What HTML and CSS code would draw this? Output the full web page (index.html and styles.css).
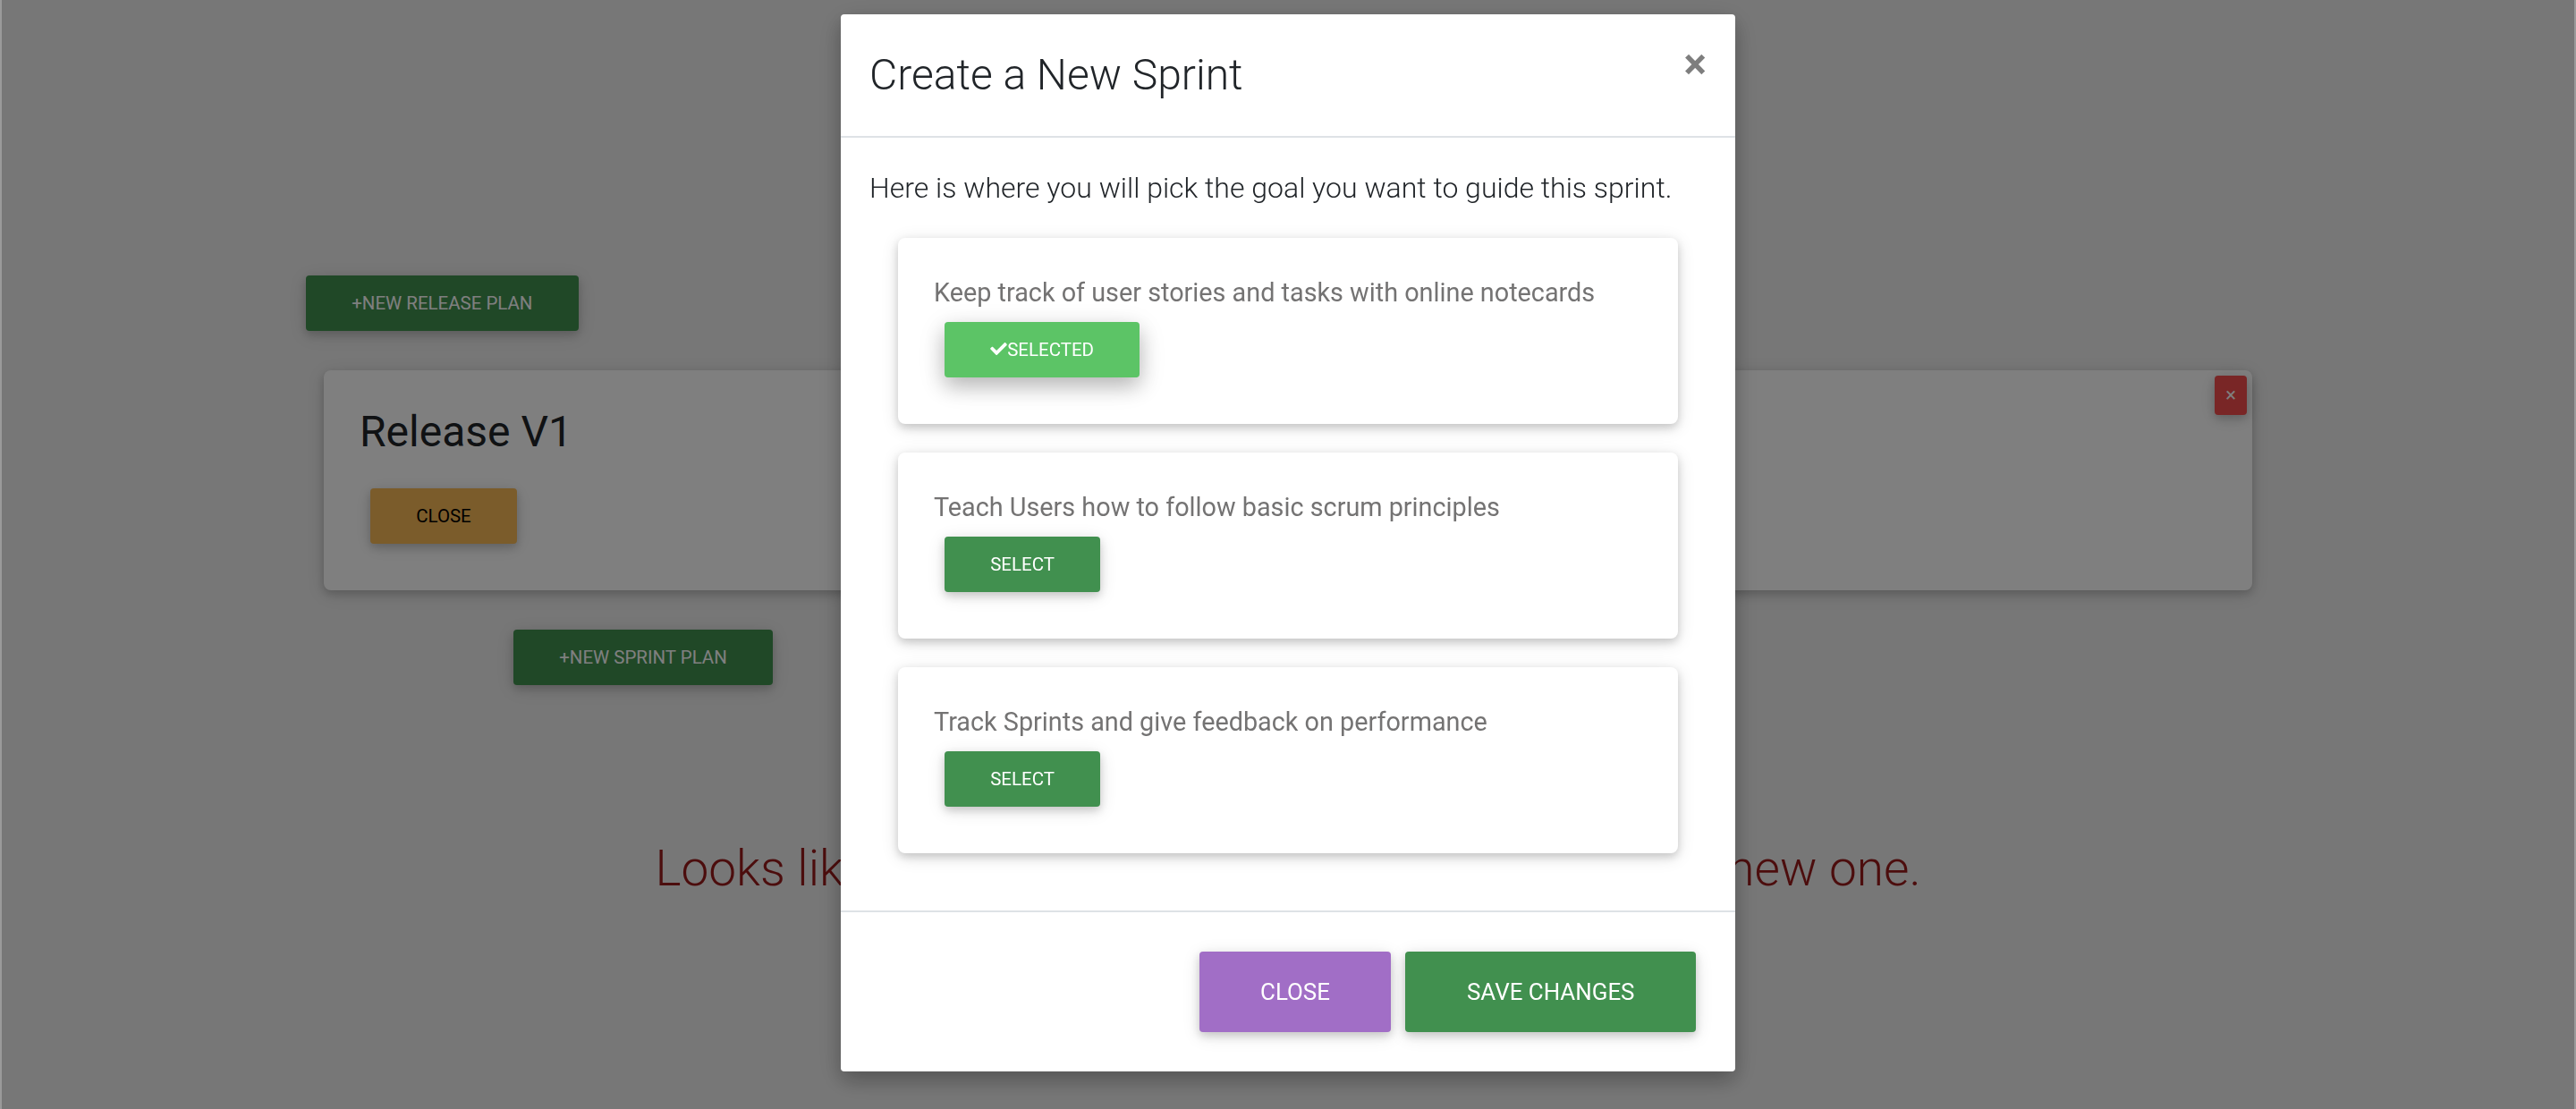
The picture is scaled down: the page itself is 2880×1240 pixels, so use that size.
FILE: index.html
```html
<!DOCTYPE html>
<html lang="en">
<head>
<meta charset="utf-8">
<title>Sprints</title>
<link rel="stylesheet" href="styles.css">
</head>
<body>
<main class="page">
  <div class="container">
    <button class="btn btn-sm btn-green">+New Release Plan</button>
    <section class="release-card">
      <button class="btn-remove" aria-label="Remove">&times;</button>
      <h3 class="release-title">Release V1</h3>
      <div><button class="btn btn-sm btn-yellow">Close</button></div>
    </section>
    <button class="btn btn-sm btn-green sprint-btn">+New Sprint Plan</button>
    <h2 class="empty-msg">Looks like you don't have any sprints yet. Create a new one.</h2>
  </div>
</main>

<div class="backdrop"></div>

<div class="modal">
  <div class="modal-dialog">
    <div class="modal-header">
      <h4 class="modal-title">Create a New Sprint</h4>
      <button class="close" aria-label="Close">&times;</button>
    </div>
    <div class="modal-body">
      <p class="lead-text">Here is where you will pick the goal you want to guide this sprint.</p>
      <div class="goals">
        <div class="goal-card">
          <p class="goal-text">Keep track of user stories and tasks with online notecards</p>
          <button class="btn btn-sm btn-selected">
            <svg class="check" viewBox="0 64 512 384" aria-hidden="true"><path d="M173.898 439.404l-166.4-166.4c-9.997-9.997-9.997-26.206 0-36.204l36.203-36.204c9.997-9.998 26.207-9.998 36.204 0L192 312.69 432.095 72.596c9.997-9.997 26.207-9.997 36.204 0l36.203 36.204c9.997 9.997 9.997 26.206 0 36.204l-294.4 294.401c-9.998 9.997-26.207 9.997-36.204-.001z"/></svg>Selected
          </button>
        </div>
        <div class="goal-card">
          <p class="goal-text">Teach Users how to follow basic scrum principles</p>
          <button class="btn btn-sm btn-green">Select</button>
        </div>
        <div class="goal-card">
          <p class="goal-text">Track Sprints and give feedback on performance</p>
          <button class="btn btn-sm btn-green">Select</button>
        </div>
      </div>
    </div>
    <div class="modal-footer">
      <button class="btn btn-purple btn-close">Close</button>
      <button class="btn btn-green btn-save">Save Changes</button>
    </div>
  </div>
</div>
</body>
</html>
```

FILE: styles.css
```css
* { box-sizing: border-box; }

html {
  background: #9a9a9a;
}

body {
  margin: 0 2px;
  min-height: 100vh;
  background: #eeeeee;
  font-family: Roboto, "Liberation Sans", Arial, sans-serif;
  color: #212529;
}

.page {
  min-height: 1240px;
}

.container {
  width: 2220px;
  margin: 0 auto;
  padding-top: 296px;
  display: flex;
  flex-direction: column;
  align-items: flex-start;
}

/* Buttons */
.btn {
  display: inline-flex;
  align-items: center;
  justify-content: center;
  border: 0;
  border-radius: 4px;
  margin: 12px;
  font-family: Roboto, "Liberation Sans", Arial, sans-serif;
  font-weight: 400;
  text-transform: uppercase;
  color: #fff;
  cursor: pointer;
  box-shadow: 0 4px 10px 0 rgba(0,0,0,.16), 0 4px 20px 0 rgba(0,0,0,.12);
  white-space: nowrap;
}

.btn-sm {
  padding: 16px 51.2px;
  font-size: 20.48px;
  line-height: 30px;
}

.btn-green { background: #41904f; }
.btn-selected {
  background: #5cc466;
  box-shadow: 0 10px 22px 0 rgba(0,0,0,.18), 0 8px 30px 0 rgba(0,0,0,.15);
}
.btn-yellow { background: #f7b956; color: #000; }
.btn-purple { background: #a16ec6; }

.check {
  width: 19px;
  height: 14px;
  fill: #fff;
  margin-top: -2px;
}

/* Release card */
.release-card {
  position: relative;
  align-self: stretch;
  margin: 32px 32px 0;
  padding: 40px;
  background: #ffffff;
  border-radius: 8px;
  box-shadow: 0 4px 10px 0 rgba(0,0,0,.16), 0 4px 20px 0 rgba(0,0,0,.12);
}

.release-title {
  margin: 0 0 22px;
  font-size: 48px;
  font-weight: 400;
  line-height: 1.2;
  color: #212529;
}

.btn-remove {
  position: absolute;
  top: 6px;
  right: 6px;
  width: 36px;
  height: 44px;
  border: 0;
  border-radius: 4px;
  padding: 0;
  background: #f24c4c;
  color: #fff;
  font-family: Roboto, "Liberation Sans", Arial, sans-serif;
  font-size: 22px;
  line-height: 44px;
  box-shadow: 0 4px 10px 0 rgba(0,0,0,.16), 0 4px 20px 0 rgba(0,0,0,.12);
}

.sprint-btn {
  margin-top: 44px;
  margin-left: 244px;
}

.empty-msg {
  align-self: stretch;
  margin: 160px 0 0;
  text-align: center;
  font-size: 55px;
  font-weight: 300;
  line-height: 1.2;
  color: #981a1a;
}

/* Backdrop */
.backdrop {
  position: fixed;
  top: 0;
  bottom: 0;
  left: 2px;
  right: 2px;
  background: rgba(0,0,0,.5);
}

/* Modal */
.modal {
  position: fixed;
  inset: 0;
  display: flex;
  justify-content: center;
  align-items: flex-start;
}

.modal-dialog {
  width: 1000px;
  margin-top: 16px;
  background: #fff;
  border-radius: 4px;
  box-shadow: 0 10px 22px 0 rgba(0,0,0,.18), 0 8px 30px 0 rgba(0,0,0,.15);
}

.modal-header {
  display: flex;
  align-items: flex-start;
  justify-content: space-between;
  padding: 32px;
  border-bottom: 2px solid #dee2e6;
}

.modal-title {
  margin: 0;
  font-size: 48px;
  font-weight: 300;
  line-height: 72px;
  color: #212529;
}

.close {
  margin: -32px -32px -32px auto;
  padding: 32px;
  border: 0;
  background: transparent;
  font-family: Roboto, "Liberation Sans", Arial, sans-serif;
  font-size: 48px;
  font-weight: 700;
  line-height: 1;
  color: #000;
  opacity: .5;
  text-shadow: 0 2px 0 #fff;
  cursor: pointer;
}

.modal-body {
  padding: 32px;
}

.lead-text {
  margin: 0 0 32px;
  font-size: 32px;
  font-weight: 300;
  line-height: 48px;
  color: #212529;
}

.goals {
  padding: 0 32px;
}

.goal-card {
  margin-bottom: 32px;
  padding: 40px;
  background: #fff;
  border-radius: 8px;
  box-shadow: 0 4px 10px 0 rgba(0,0,0,.16), 0 4px 20px 0 rgba(0,0,0,.12);
}

.goal-text {
  margin: 0;
  font-size: 28.8px;
  font-weight: 400;
  line-height: 42px;
  color: #747373;
}

.modal-footer {
  display: flex;
  justify-content: flex-end;
  align-items: center;
  padding: 32px;
  border-top: 2px solid #dee2e6;
}

.modal-footer .btn {
  padding: 26px 68.5px;
  font-size: 25.92px;
  line-height: 38px;
}

.btn-close { margin-right: 8px; }
.btn-save { margin-left: 8px; }
```
